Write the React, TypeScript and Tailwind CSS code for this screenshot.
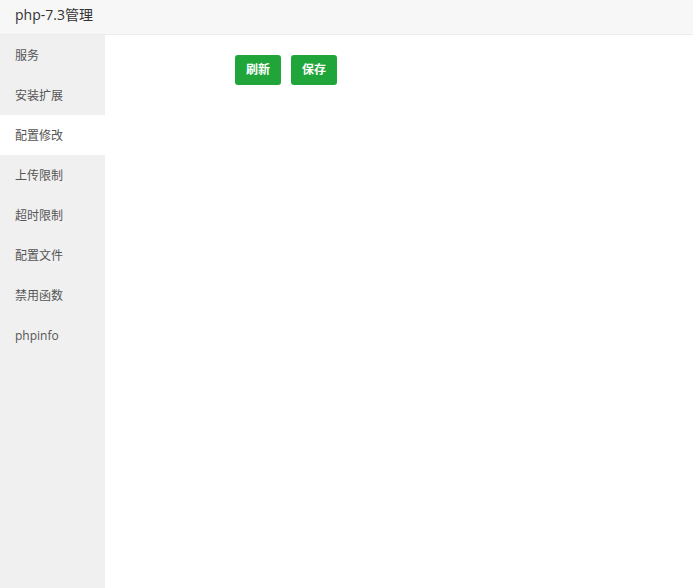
const menu = ["服务", "安装扩展", "配置修改", "上传限制", "超时限制", "配置文件", "禁用函数", "phpinfo"];

export default function App() {
  return (
    <div className="w-[693px] h-[588px] flex flex-col bg-white overflow-hidden font-['Open_Sans','Noto_Sans_CJK_SC',sans-serif]">
      <div className="h-[35px] shrink-0 bg-[#f7f7f7] border-b border-[#ececec] flex items-center px-[15px] pb-[6px] text-[14px] text-[#333]">
        php-7.3管理
      </div>
      <div className="flex flex-1">
        <div className="w-[105px] bg-[#f0f0f0] flex flex-col">
          {menu.map((m) => (
            <div
              key={m}
              className={`h-[40px] flex items-center px-[15px] pt-[2px] text-[12px] text-[#555] ${
                m === "配置修改" ? "bg-white" : ""
              }`}
            >
              {m}
            </div>
          ))}
        </div>
        <div className="flex-1 pt-[20px] pl-[130px]">
          <div className="flex gap-[10px]">
            <button className="w-[46px] h-[30px] rounded-[3px] bg-[#20a53a] text-white text-[12px] font-bold">
              刷新
            </button>
            <button className="w-[46px] h-[30px] rounded-[3px] bg-[#20a53a] text-white text-[12px] font-bold">
              保存
            </button>
          </div>
        </div>
      </div>
    </div>
  );
}
